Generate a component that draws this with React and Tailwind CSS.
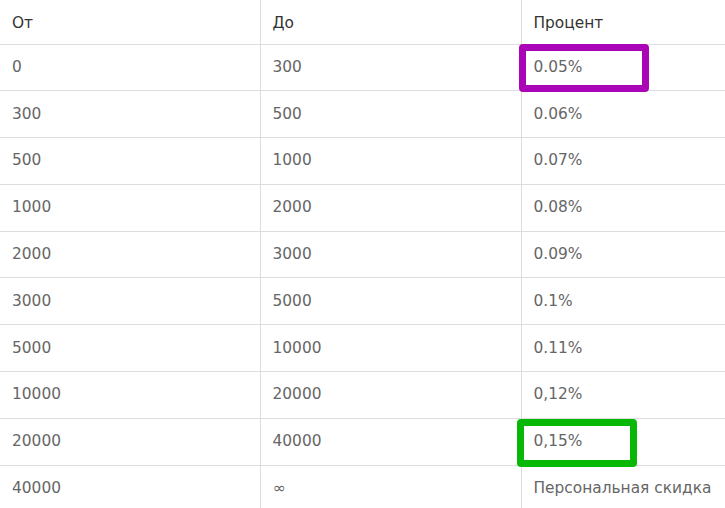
const rows = [
  ["0", "300", "0.05%"],
  ["300", "500", "0.06%"],
  ["500", "1000", "0.07%"],
  ["1000", "2000", "0.08%"],
  ["2000", "3000", "0.09%"],
  ["3000", "5000", "0.1%"],
  ["5000", "10000", "0.11%"],
  ["10000", "20000", "0,12%"],
  ["20000", "40000", "0,15%"],
  ["40000", "∞", "Персональная скидка"],
];

export default function App() {
  return (
    <div
      className="w-[725px] h-[508px] overflow-hidden bg-white"
      style={{ fontFamily: '"DejaVu Sans", "Noto Sans", sans-serif' }}
    >
      <table className="w-[782px] border-collapse table-fixed text-[15.4px]">
        <thead>
          <tr className="h-[44px] text-[#333]">
            <th className="w-[260px] text-left font-normal px-3 pt-1 border-r border-[#ddd]">От</th>
            <th className="w-[261px] text-left font-normal px-3 pt-1 border-r border-[#ddd]">До</th>
            <th className="text-left font-normal px-3 pt-1">Процент</th>
          </tr>
        </thead>
        <tbody className="text-[#666]">
          {rows.map((r, i) => (
            <tr key={i} className="h-[46.8px] border-t border-[#ddd]">
              <td className="px-3 border-r border-[#ddd]">{r[0]}</td>
              <td className="px-3 border-r border-[#ddd]">{r[1]}</td>
              <td className="px-3 relative whitespace-nowrap">
                {r[2]}
                {i === 0 && (
                  <div className="absolute left-[-3px] top-[-1px] w-[130px] h-[48px] border-[7px] border-[#a905b6] rounded-[4px]" />
                )}
                {i === 8 && (
                  <div className="absolute left-[-5px] top-0 w-[120px] h-[48px] border-[7px] border-[#07b807] rounded-[4px]" />
                )}
              </td>
            </tr>
          ))}
        </tbody>
      </table>
    </div>
  );
}
